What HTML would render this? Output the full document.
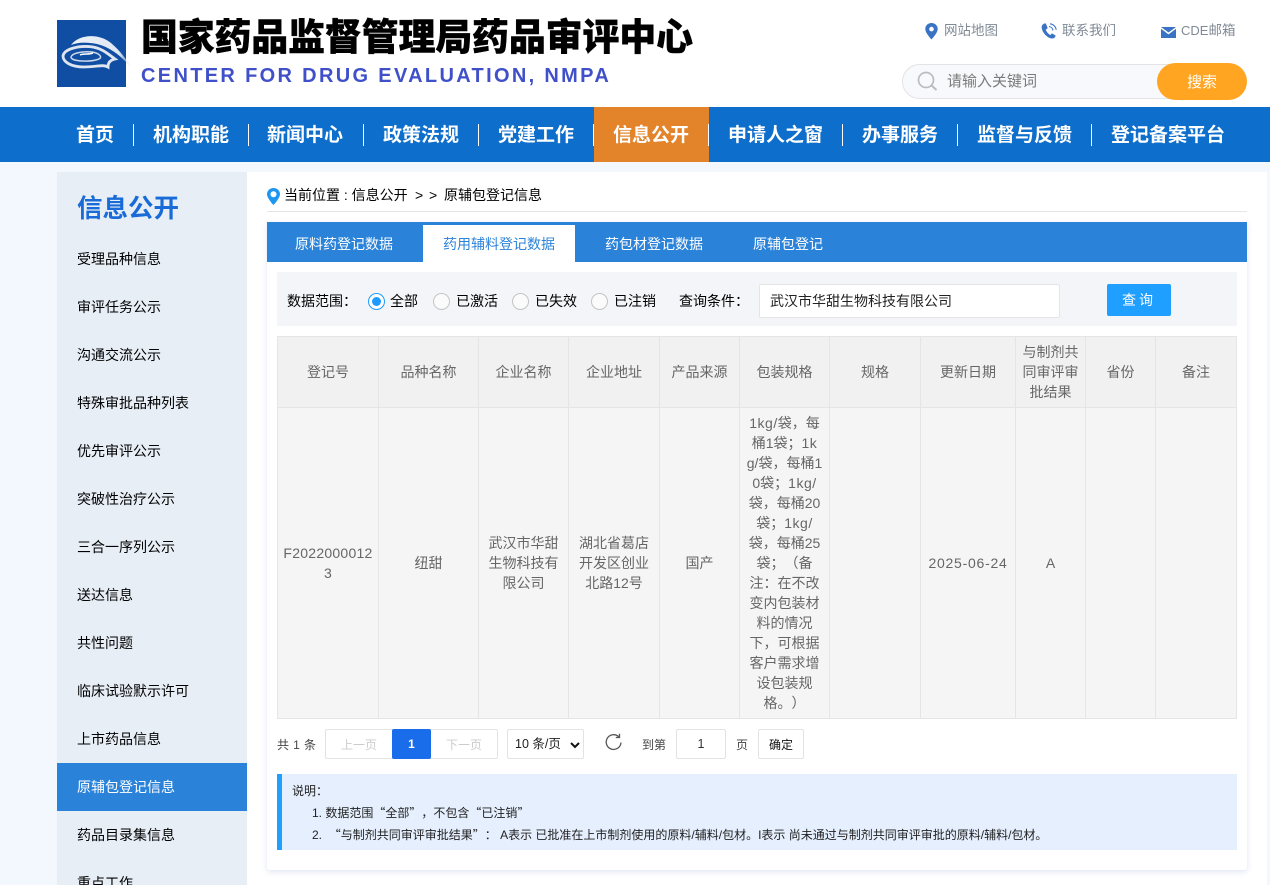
<!DOCTYPE html>
<html lang="zh-CN"><head><meta charset="utf-8"><title>原辅包登记信息</title>
<style>
html,body{margin:0;padding:0;width:1270px;height:885px;overflow:hidden}
body{background:#f3f7fe}
#w{position:relative;width:1270px;height:885px;overflow:hidden;background:#f3f7fe;font-family:"Liberation Sans","Noto Sans CJK SC",sans-serif;color:#000;font-size:14px;text-spacing-trim:space-all}
.a{position:absolute;white-space:nowrap}
.nav{top:108px;height:55px;line-height:55px;color:#fff;font-size:19px;font-weight:700}
.sep{top:124px;width:1px;height:22px;background:#fff}
.side{left:77px;font-size:14px;line-height:20px;color:#000}
.tab{top:234px;line-height:20px;font-size:14px;color:#fff}
.r{top:293px;width:15px;height:15px;border:1px solid #c4c4c4;border-radius:50%;background:#fbfbfb}
.v{position:absolute;background:#e5e5e5;width:1px;top:336px;height:383px}
.c{position:absolute;text-align:center;color:#666;font-size:14px;line-height:20px;white-space:normal;word-break:break-all}
.box{position:absolute;background:#fff;border:1px solid #e3e3e3;box-sizing:border-box;text-align:center}
.l{letter-spacing:.5px}
.q{font-family:"Noto Sans CJK SC",sans-serif}
</style></head><body><div id="w">
<div class="a" style="left:0;top:0;width:1270px;height:107px;background:#fff"></div>
<svg class="a" style="left:57px;top:20px" width="76" height="67" viewBox="0 0 76 67">
<defs><linearGradient id="g" x1="0" x2="1" y1="0" y2="0"><stop offset="0" stop-color="#eef2f8"/><stop offset=".8" stop-color="#dfe7f2"/><stop offset="1" stop-color="#cfdcf0" stop-opacity=".3"/></linearGradient></defs>
<rect width="69" height="67" fill="#0f4ea3"/>
<path d="M14 25C22 14 42 13 54 23C62 30 68 37 74 47C64 36 53 27 40 24C30 22 21 22 14 25Z" fill="url(#g)"/>
<path d="M6 36C7 29 22 25 36 27C46 29 51 34 58 39C53 40 51 43 51 47C46 44 40 47 27 47C14 47 6 42 6 36Z" fill="none" stroke="#dfe6f0" stroke-width="2.800"/>
<path d="M14 37C15 33 26 31 35 32C42 33 46 37 42 39C35 42 14 42 14 37Z" fill="none" stroke="#cdd8e8" stroke-width="1.500"/>
<path d="M23 35C27 33 31 35 36 33" fill="none" stroke="#fff" stroke-width="1.500"/>
</svg>
<div class="a" style="left:141px;top:12px;font-size:36.800px;line-height:52px;font-weight:900;color:#000;-webkit-text-stroke:.5px #000">国家药品监督管理局药品审评中心</div>
<div class="a" style="left:141px;top:62px;font-size:20px;line-height:28px;font-weight:700;letter-spacing:2.330px;color:#3f50c9">CENTER FOR DRUG EVALUATION, NMPA</div>

<svg class="a" style="left:925px;top:23px" width="13" height="17" viewBox="0 0 13 17"><path fill-rule="evenodd" d="M6.500 0C2.900 0 .3 2.600 .3 6c0 4 6.200 10.500 6.200 10.500S12.700 10 12.700 6C12.700 2.600 10.100 0 6.500 0ZM6.500 3.800a2.300 2.300 0 1 1 0 4.600a2.300 2.300 0 0 1 0-4.600Z" fill="#3a73c4"/></svg>
<div class="a" style="left:944px;top:21px;line-height:20px;font-size:13.500px;color:#808a96">网站地图</div>
<svg class="a" style="left:1041px;top:23px" width="16" height="16" viewBox="0 0 16 16"><path d="M3.500 .5C1.500 1.200 .4 2.800 .7 5c.6 4.500 5 9.500 9.800 10.500c1.800 .3 3.300-.5 4-2.200c.2-.5 0-.9-.4-1.100l-2.500-1.500c-.5-.3-.9-.2-1.200 .2l-.9 1.100c-2.300-1-4-3.200-4.700-5.500l1.300-.7c.4-.3 .6-.7 .4-1.200L5 .9C4.700 .4 4.100 .3 3.500 .5Z" fill="#3a73c4"/><path d="M8 3.500c2 .2 3.700 1.800 4 4M9 .8c3.200 .3 5.800 2.800 6.200 6" fill="none" stroke="#3a73c4" stroke-width="1.100"/></svg>
<div class="a" style="left:1062px;top:21px;line-height:20px;font-size:13.500px;color:#808a96">联系我们</div>
<svg class="a" style="left:1161px;top:27px" width="15" height="11" viewBox="0 0 15 11"><path d="M0 0H15L7.500 5.500Z M0 1.800V11H15V1.800L7.500 7.400Z" fill="#3a73c4"/></svg>
<div class="a" style="left:1181px;top:21px;line-height:20px;font-size:13.500px;color:#808a96"><span style="font-size:13px">CDE</span>邮箱</div>

<div class="a" style="left:902px;top:64px;width:300px;height:35px;box-sizing:border-box;border:1px solid #e3e3e3;border-radius:18px;background:#f8f9fd"></div>
<svg class="a" style="left:917px;top:71px" width="21" height="21" viewBox="0 0 21 21"><circle cx="9" cy="9" r="7.500" fill="none" stroke="#bcbcbc" stroke-width="1.700"/><path d="M14.500 14.500L19.500 19" stroke="#bcbcbc" stroke-width="2"/></svg>
<div class="a" style="left:947px;top:71px;line-height:22px;font-size:15px;color:#7b7b7b">请输入关键词</div>
<div class="a" style="left:1157px;top:63px;width:90px;height:37px;border-radius:19px;background:#ffa522;color:#fff;text-align:center;line-height:39px;font-size:15px">搜索</div>

<div class="a" style="left:0;top:107px;width:1270px;height:55px;background:#0e6ecc"></div>
<div class="a" style="left:594px;top:107px;width:115px;height:55px;background:#e3842b"></div>
<div class="a nav" style="left:76px">首页</div><div class="a sep" style="left:133px"></div>
<div class="a nav" style="left:153px">机构职能</div><div class="a sep" style="left:248px"></div>
<div class="a nav" style="left:267px">新闻中心</div><div class="a sep" style="left:363px"></div>
<div class="a nav" style="left:383px">政策法规</div><div class="a sep" style="left:478px"></div>
<div class="a nav" style="left:498px">党建工作</div><div class="a sep" style="left:593px"></div>
<div class="a nav" style="left:613px">信息公开</div><div class="a sep" style="left:708px"></div>
<div class="a nav" style="left:728px">申请人之窗</div><div class="a sep" style="left:842px"></div>
<div class="a nav" style="left:862px">办事服务</div><div class="a sep" style="left:957px"></div>
<div class="a nav" style="left:977px">监督与反馈</div><div class="a sep" style="left:1091px"></div>
<div class="a nav" style="left:1111px">登记备案平台</div>

<div class="a" style="left:57px;top:172px;width:190px;height:713px;background:#e7eef6"></div>
<div class="a" style="left:77px;top:191px;font-size:25.500px;line-height:37px;font-weight:700;color:#196cd8">信息公开</div>
<div class="a side" style="top:249px">受理品种信息</div>
<div class="a side" style="top:297px">审评任务公示</div>
<div class="a side" style="top:345px">沟通交流公示</div>
<div class="a side" style="top:393px">特殊审批品种列表</div>
<div class="a side" style="top:441px">优先审评公示</div>
<div class="a side" style="top:489px">突破性治疗公示</div>
<div class="a side" style="top:537px">三合一序列公示</div>
<div class="a side" style="top:585px">送达信息</div>
<div class="a side" style="top:633px">共性问题</div>
<div class="a side" style="top:681px">临床试验默示许可</div>
<div class="a side" style="top:729px">上市药品信息</div>
<div class="a" style="left:57px;top:763px;width:190px;height:48px;background:#2b83d9"></div>
<div class="a side" style="top:777px;color:#fff">原辅包登记信息</div>
<div class="a side" style="top:825px">药品目录集信息</div>
<div class="a side" style="top:873px">重点工作</div>

<div class="a" style="left:247px;top:172px;width:1020px;height:713px;background:#fff"></div>
<div class="a" style="left:267px;top:222px;width:980px;height:648px;background:#fff;border-radius:0 0 3px 3px;box-shadow:0 2px 6px rgba(60,100,190,.16)"></div>
<svg class="a" style="left:267px;top:188px" width="13" height="17" viewBox="0 0 13 17"><path fill-rule="evenodd" d="M6.500 0C2.900 0 0 2.700 0 6.200c0 4 6.500 10.800 6.500 10.800S13 10.200 13 6.200C13 2.700 10.100 0 6.500 0ZM6.500 3.300a3 3 0 1 1 0 6a3 3 0 0 1 0-6Z" fill="#1e96f0"/></svg>
<div class="a" style="left:284px;top:185px;line-height:20px;font-size:14px">当前位置 : 信息公开</div>
<div class="a" style="left:415px;top:185px;line-height:20px;font-size:14px">&gt;</div>
<div class="a" style="left:429px;top:185px;line-height:20px;font-size:14px">&gt;</div>
<div class="a" style="left:444px;top:185px;line-height:20px;font-size:14px">原辅包登记信息</div>
<div class="a" style="left:267px;top:211px;width:980px;height:1px;background:#e5e5e5"></div>

<div class="a" style="left:267px;top:222px;width:980px;height:40px;background:#2b83d9"></div>
<div class="a" style="left:423px;top:225px;width:152px;height:37px;background:#fff"></div>
<div class="a tab" style="left:295px">原料药登记数据</div>
<div class="a tab" style="left:443px;color:#2b83d9">药用辅料登记数据</div>
<div class="a tab" style="left:605px">药包材登记数据</div>
<div class="a tab" style="left:753px">原辅包登记</div>

<div class="a" style="left:277px;top:272px;width:960px;height:54px;background:#f4f5f9"></div>
<div class="a" style="left:287px;top:291px;line-height:20px">数据范围：</div>
<div class="a r" style="left:368px;border-color:#1f9bff;background:#fff"></div>
<div class="a" style="left:372px;top:297px;width:9px;height:9px;border-radius:50%;background:#1f9bff"></div>
<div class="a" style="left:390px;top:291px;line-height:20px">全部</div>
<div class="a r" style="left:433px"></div><div class="a" style="left:456px;top:291px;line-height:20px">已激活</div>
<div class="a r" style="left:512px"></div><div class="a" style="left:535px;top:291px;line-height:20px">已失效</div>
<div class="a r" style="left:591px"></div><div class="a" style="left:614px;top:291px;line-height:20px">已注销</div>
<div class="a" style="left:679px;top:291px;line-height:20px">查询条件：</div>
<div class="a" style="left:759px;top:284px;width:301px;height:34px;box-sizing:border-box;background:#fff;border:1px solid #e5e5e5;border-radius:2px;padding-left:10px;line-height:32px;font-size:14px;color:#222">武汉市华甜生物科技有限公司</div>
<div class="a" style="left:1107px;top:284px;width:64px;height:32px;background:#1f9fff;border-radius:2px;color:#fff;text-align:center;line-height:32px;font-size:14px;letter-spacing:3px">查询</div>

<div class="a" style="left:277px;top:336px;width:960px;height:383px;background:#f5f5f5"></div>
<div class="a" style="left:277px;top:336px;width:960px;height:71px;background:#f1f1f1"></div>
<div class="a" style="left:277px;top:336px;width:960px;height:1px;background:#e5e5e5"></div>
<div class="a" style="left:277px;top:407px;width:960px;height:1px;background:#e5e5e5"></div>
<div class="a" style="left:277px;top:718px;width:960px;height:1px;background:#e5e5e5"></div>
<i class="v" style="left:277px"></i><i class="v" style="left:378px"></i><i class="v" style="left:478px"></i><i class="v" style="left:568px"></i><i class="v" style="left:659px"></i><i class="v" style="left:739px"></i><i class="v" style="left:829px"></i><i class="v" style="left:920px"></i><i class="v" style="left:1015px"></i><i class="v" style="left:1085px"></i><i class="v" style="left:1155px"></i><i class="v" style="left:1236px"></i>

<div class="c" style="left:278px;width:100px;top:362px">登记号</div>
<div class="c" style="left:379px;width:99px;top:362px">品种名称</div>
<div class="c" style="left:479px;width:89px;top:362px">企业名称</div>
<div class="c" style="left:569px;width:90px;top:362px">企业地址</div>
<div class="c" style="left:660px;width:79px;top:362px">产品来源</div>
<div class="c" style="left:740px;width:89px;top:362px">包装规格</div>
<div class="c" style="left:830px;width:90px;top:362px">规格</div>
<div class="c" style="left:921px;width:94px;top:362px">更新日期</div>
<div class="c" style="left:1016px;width:69px;top:342px">与制剂共<br>同审评审<br>批结果</div>
<div class="c" style="left:1086px;width:69px;top:362px">省份</div>
<div class="c" style="left:1156px;width:80px;top:362px">备注</div>

<div class="c" style="left:278px;width:100px;top:543px;letter-spacing:.25px">F2022000012<br>3</div>
<div class="c" style="left:379px;width:99px;top:553px">纽甜</div>
<div class="c" style="left:479px;width:89px;top:533px">武汉市华甜<br>生物科技有<br>限公司</div>
<div class="c" style="left:569px;width:90px;top:533px">湖北省葛店<br>开发区创业<br>北路12号</div>
<div class="c" style="left:660px;width:79px;top:553px">国产</div>
<div class="c" style="left:740px;width:89px;top:413px"><span class="l">1kg/</span>袋，每<br>桶1袋；<span class="l">1k</span><br>g/袋，每桶1<br>0袋；<span class="l">1kg/</span><br>袋，每桶20<br>袋；<span class="l">1kg/</span><br>袋，每桶25<br>袋；（备<br>注：在不改<br>变内包装材<br>料的情况<br>下，可根据<br>客户需求增<br>设包装规<br>格。）</div>
<div class="c" style="left:921px;width:94px;top:553px;letter-spacing:.75px">2025-06-24</div>
<div class="c" style="left:1016px;width:69px;top:553px">A</div>

<div class="a" style="left:277px;top:735px;font-size:12px;line-height:20px;color:#444;letter-spacing:.4px">共 1 条</div>
<div class="box" style="left:325px;top:729px;width:173px;height:30px;border-radius:2px"></div>
<div class="a" style="left:341px;top:735px;font-size:12px;line-height:20px;color:#ccc">上一页</div>
<div class="a" style="left:392px;top:729px;width:39px;height:30px;border-radius:2px;background:#196cea;color:#fff;text-align:center;line-height:30px;font-size:12px;font-weight:700">1</div>
<div class="a" style="left:446px;top:735px;font-size:12px;line-height:20px;color:#ccc">下一页</div>
<div class="box" style="left:507px;top:729px;width:77px;height:30px;border-radius:2px;text-align:left;padding-left:7px;line-height:28px;font-size:12.500px;color:#222">10 条/页</div>
<svg class="a" style="left:570px;top:742px" width="10" height="7" viewBox="0 0 10 7"><path d="M1 1L5 5L9 1" fill="none" stroke="#111" stroke-width="2"/></svg>
<svg class="a" style="left:604px;top:733px" width="19" height="19" viewBox="0 0 19 19"><path d="M14.800 3.800A7.400 7.400 0 1 0 17 9.500" fill="none" stroke="#555" stroke-width="1.300"/><path d="M15.500 .8V4.500H11.800" fill="none" stroke="#555" stroke-width="1.300"/></svg>
<div class="a" style="left:642px;top:735px;font-size:12px;line-height:20px;color:#444">到第</div>
<div class="box" style="left:676px;top:729px;width:50px;height:30px;border-radius:2px;line-height:28px;font-size:12.500px;color:#333">1</div>
<div class="a" style="left:736px;top:735px;font-size:12px;line-height:20px;color:#444">页</div>
<div class="box" style="left:758px;top:729px;width:46px;height:30px;border-radius:2px;line-height:30px;font-size:12px;color:#111">确定</div>

<div class="a" style="left:277px;top:774px;width:960px;height:76px;background:#e5effd"></div>
<div class="a" style="left:277px;top:774px;width:5px;height:76px;background:#1f9fff"></div>
<div class="a" style="left:292px;top:781px;font-size:12px;line-height:20px;color:#222">说明：</div>
<div class="a" style="left:312px;top:803px;font-size:12px;line-height:20px;color:#222">1. 数据范围<span class="q">“</span>全部<span class="q">”</span>，不包含<span class="q">“</span>已注销<span class="q">”</span></div>
<div class="a" style="left:312px;top:825px;font-size:12px;line-height:20px;color:#222">2. &nbsp;<span class="q">“</span>与制剂共同审评审批结果<span class="q">”</span>： A表示 已批准在上市制剂使用的原料/辅料/包材。I表示 尚未通过与制剂共同审评审批的原料/辅料/包材。</div>
</div></body></html>
